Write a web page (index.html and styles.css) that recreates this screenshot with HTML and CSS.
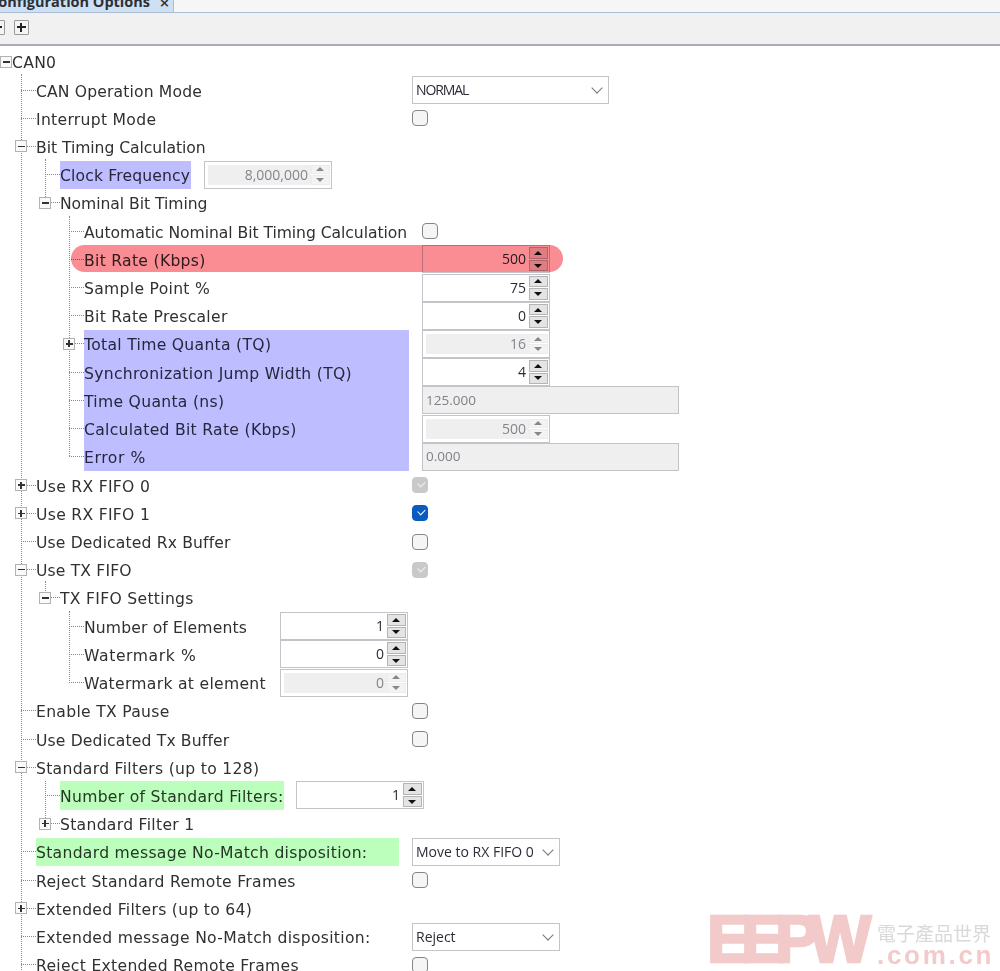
FILE: index.html
```html
<!DOCTYPE html>
<html lang="en">
<head>
<meta charset="utf-8">
<title>Configuration Options</title>
<link rel="stylesheet" href="styles.css">
</head>
<body>
<div class="page">
  <div class="tabbar">
    <div class="tab"><span class="tab-title">Configuration Options</span><span class="tab-close">×</span></div>
  </div>
  <div class="toolbar">
    <button class="tool tool-cut"><span class="minus"></span></button>
    <button class="tool"><span class="minus"></span><span class="plus"></span></button>
  </div>
  <div class="tree">
    <i class="guide g-main"></i>
    <i class="guide g-bit"></i>
    <i class="guide g-nominal"></i>
    <i class="guide g-tx"></i>
    <i class="guide g-txs"></i>
    <i class="guide g-std"></i>

    <div class="row"><span class="gut l0"><b class="box open"></b><i class="twig t-s"></i></span><span class="label">CAN0</span></div>
    <div class="row"><span class="gut l1"><i class="twig"></i></span><span class="label w376 snug">CAN Operation Mode</span><div class="select s196"><span class="squeeze">NORMAL</span><i class="chev"></i></div></div>
    <div class="row"><span class="gut l1"><i class="twig"></i></span><span class="label w376">Interrupt Mode</span><i class="check"></i></div>
    <div class="row"><span class="gut l1"><b class="box open"></b><i class="twig t-b"></i></span><span class="label w376 tight">Bit Timing Calculation</span></div>
    <div class="row"><span class="gut l2"><i class="twig"></i></span><span class="label hl-blue w131 snug">Clock Frequency</span><div class="spin off m13"><span class="val">8,000,000</span><span class="btns"><i class="up"></i><i class="down"></i></span></div></div>
    <div class="row"><span class="gut l2"><b class="box open"></b><i class="twig t-b"></i></span><span class="label tight">Nominal Bit Timing</span></div>
    <div class="row"><span class="gut l3"><i class="twig"></i></span><span class="label w338 tight">Automatic Nominal Bit Timing Calculation</span><i class="check"></i></div>
    <div class="row"><span class="gut l3"><i class="twig"></i></span><span class="label w338">Bit Rate (Kbps)</span><div class="spin"><span class="val">500</span><span class="btns"><i class="up"></i><i class="down"></i></span></div><i class="pill"></i></div>
    <div class="row"><span class="gut l3"><i class="twig"></i></span><span class="label w338">Sample Point %</span><div class="spin"><span class="val">75</span><span class="btns"><i class="up"></i><i class="down"></i></span></div></div>
    <div class="row"><span class="gut l3"><i class="twig"></i></span><span class="label w338">Bit Rate Prescaler</span><div class="spin"><span class="val">0</span><span class="btns"><i class="up"></i><i class="down"></i></span></div></div>
    <div class="row"><span class="gut l3"><b class="box"></b><i class="twig t-b"></i></span><span class="label hl-blue w325 mr13">Total Time Quanta (TQ)</span><div class="spin off"><span class="val">16</span><span class="btns"><i class="up"></i><i class="down"></i></span></div></div>
    <div class="row"><span class="gut l3"><i class="twig"></i></span><span class="label hl-blue w325 mr13">Synchronization Jump Width (TQ)</span><div class="spin"><span class="val">4</span><span class="btns"><i class="up"></i><i class="down"></i></span></div></div>
    <div class="row"><span class="gut l3"><i class="twig"></i></span><span class="label hl-blue w325 mr13">Time Quanta (ns)</span><div class="field">125.000</div></div>
    <div class="row"><span class="gut l3"><i class="twig"></i></span><span class="label hl-blue w325 mr13">Calculated Bit Rate (Kbps)</span><div class="spin off"><span class="val">500</span><span class="btns"><i class="up"></i><i class="down"></i></span></div></div>
    <div class="row"><span class="gut l3"><i class="twig"></i></span><span class="label hl-blue w325 mr13 wide">Error %</span><div class="field">0.000</div></div>
    <div class="row"><span class="gut l1"><b class="box"></b><i class="twig t-b"></i></span><span class="label w376">Use RX FIFO 0</span><i class="check gray"></i></div>
    <div class="row"><span class="gut l1"><b class="box"></b><i class="twig t-b"></i></span><span class="label w376">Use RX FIFO 1</span><i class="check blue"></i></div>
    <div class="row"><span class="gut l1"><i class="twig"></i></span><span class="label w376 snug">Use Dedicated Rx Buffer</span><i class="check"></i></div>
    <div class="row"><span class="gut l1"><b class="box open"></b><i class="twig t-b"></i></span><span class="label w376 snug">Use TX FIFO</span><i class="check gray"></i></div>
    <div class="row"><span class="gut l2"><b class="box open"></b><i class="twig t-b"></i></span><span class="label">TX FIFO Settings</span></div>
    <div class="row"><span class="gut l3"><i class="twig"></i></span><span class="label w196 snug">Number of Elements</span><div class="spin"><span class="val">1</span><span class="btns"><i class="up"></i><i class="down"></i></span></div></div>
    <div class="row"><span class="gut l3"><i class="twig"></i></span><span class="label w196 wide">Watermark %</span><div class="spin"><span class="val">0</span><span class="btns"><i class="up"></i><i class="down"></i></span></div></div>
    <div class="row"><span class="gut l3"><i class="twig"></i></span><span class="label w196">Watermark at element</span><div class="spin off"><span class="val">0</span><span class="btns"><i class="up"></i><i class="down"></i></span></div></div>
    <div class="row"><span class="gut l1"><i class="twig"></i></span><span class="label w376">Enable TX Pause</span><i class="check"></i></div>
    <div class="row"><span class="gut l1"><i class="twig"></i></span><span class="label w376 snug">Use Dedicated Tx Buffer</span><i class="check"></i></div>
    <div class="row"><span class="gut l1"><b class="box open"></b><i class="twig t-b"></i></span><span class="label w376">Standard Filters (up to 128)</span></div>
    <div class="row"><span class="gut l2"><i class="twig"></i></span><span class="label hl-green w224 m12">Number of Standard Filters:</span><div class="spin"><span class="val">1</span><span class="btns"><i class="up"></i><i class="down"></i></span></div></div>
    <div class="row"><span class="gut l2"><b class="box"></b><i class="twig t-b"></i></span><span class="label">Standard Filter 1</span></div>
    <div class="row"><span class="gut l1"><i class="twig"></i></span><span class="label hl-green w363 mr13">Standard message No-Match disposition:</span><div class="select s148"><span>Move to RX FIFO 0</span><i class="chev"></i></div></div>
    <div class="row"><span class="gut l1"><i class="twig"></i></span><span class="label w376">Reject Standard Remote Frames</span><i class="check"></i></div>
    <div class="row"><span class="gut l1"><b class="box"></b><i class="twig t-b"></i></span><span class="label w376">Extended Filters (up to 64)</span></div>
    <div class="row"><span class="gut l1"><i class="twig"></i></span><span class="label w376">Extended message No-Match disposition:</span><div class="select s148"><span>Reject</span><i class="chev"></i></div></div>
    <div class="row"><span class="gut l1"><i class="twig"></i></span><span class="label w376">Reject Extended Remote Frames</span><i class="check"></i></div>
  </div>
  <div class="mark">
    <span class="mark-logo">EEPW</span>
    <span class="mark-side"><span class="mark-cn">電子產品世界</span><span class="mark-url">.com.cn</span></span>
  </div>
</div>
</body>
</html>
```
FILE: styles.css
```css
html, body { margin: 0; padding: 0; background: #fff; }
.page {
  position: relative;
  width: 1000px;
  height: 971px;
  overflow: hidden;
  font-family: "DejaVu Sans", sans-serif;
  color: #303030;
  filter: blur(0.35px);
}
.tabbar {
  height: 12px;
  background: #f6f6f6;
  border-bottom: 1px solid #a9bdd4;
  display: flex;
  overflow: hidden;
}
.tab {
  width: 173px;
  height: 12px;
  background: #cfe0f3;
  border-right: 1px solid #a9bdd4;
  display: flex;
  position: relative;
  overflow: hidden;
}
.tab-title {
  font: 700 14.5px/14px "Open Sans", sans-serif;
  color: #2b3036;
  margin: -5px 0 0 -11px;
  white-space: nowrap;
}
.tab-close {
  font: 700 13px/13px "DejaVu Sans", sans-serif;
  color: #333;
  margin: -4px 0 0 9px;
}
.toolbar {
  background: #f1f1f1;
  border-bottom: 2px solid #a8adb3;
  display: flex;
  align-items: flex-start;
  padding-top: 7px;
  height: 24px;
}
.tool {
  position: relative;
  width: 15px;
  height: 15px;
  padding: 0;
  margin-left: 14px;
  background: #f4f4f4;
  border: 1.5px solid #9a9a9a;
  border-radius: 1px;
}
.tool-cut { margin-left: -10px; margin-right: -5px; }
.minus { position: absolute; left: 2px; right: 2px; top: 5px; height: 2px; background: #222; }
.plus { position: absolute; top: 2px; bottom: 2px; left: 5px; width: 2px; background: #222; }

.tree { position: relative; padding-top: 1.7px; }
.row {
  position: relative;
  display: flex;
  align-items: center;
  height: 28.22px;
  font-size: 15.6px;
  letter-spacing: 0.3px;
  white-space: nowrap;
}
.gut {
  flex: none;
  display: flex;
  align-items: center;
  justify-content: flex-end;
  align-self: stretch;
}
.l0 { width: 12px; }
.l1 { width: 36px; }
.l2 { width: 60px; }
.l3 { width: 84px; }
.twig { width: 15px; height: 0; border-top: 1px dotted #888; }
.t-b { width: 9px; }
.t-s { width: 5px; }
.box {
  position: relative;
  flex: none;
  width: 10px;
  height: 10px;
  border: 1px solid #b2b2b2;
  background: #fafafa;
}
.box::before { content: ""; position: absolute; left: 1.5px; right: 1.5px; top: 4.25px; height: 1.5px; background: #333; }
.box::after { content: ""; position: absolute; top: 1.5px; bottom: 1.5px; left: 4.25px; width: 1.5px; background: #333; }
.box.open::after { display: none; }
.label {
  flex: none;
  box-sizing: border-box;
  align-self: stretch;
  display: flex;
  align-items: center;
  padding-top: 3px;
}
.tight { letter-spacing: -0.05px; }
.snug { letter-spacing: 0.15px; }
.wide { letter-spacing: 0.6px; }
.w376 { width: 376px; }
.w338 { width: 338px; }
.w196 { width: 196px; }
.w131 { width: 131px; }
.w325 { width: 325px; }
.w224 { width: 224px; }
.w363 { width: 363px; }
.mr13 { margin-right: 13px; }
.m13 { margin-left: 13px; }
.m12 { margin-right: 12px; }
.hl-blue { background: #bdbdff; color: #26263c; }
.hl-green { background: #bcffbc; color: #263526; }

.select, .spin, .field {
  box-sizing: border-box;
  height: 28px;
  border: 1.5px solid #c3c3ca;
  display: flex;
  align-items: center;
  font: 400 14px/1 "Open Sans", sans-serif;
  letter-spacing: 0;
  color: #2c2c38;
  flex: none;
}
.select { background: #fff; padding: 0 5px 0 3px; justify-content: space-between; }
.squeeze { letter-spacing: -1.1px; }
.s196 { width: 197px; }
.s148 { width: 148px; }
.chev {
  width: 7px;
  height: 7px;
  border-right: 1.5px solid #777;
  border-bottom: 1.5px solid #777;
  transform: translateY(-2px) rotate(45deg);
  margin-right: 2px;
}
.spin { width: 128px; background: #fff; padding: 1px 1.5px; }
.val {
  flex: 1;
  padding-right: 2.5px;
  align-self: stretch;
  display: flex;
  align-items: center;
  justify-content: flex-end;
}
.btns { flex: none; width: 19px; height: 100%; display: flex; flex-direction: column; gap: 1px; }
.up, .down {
  flex: 1;
  position: relative;
  background: #e4e4e4;
  border: 1px solid #b4b4b4;
  box-sizing: border-box;
}
.up::after, .down::after {
  content: "";
  position: absolute;
  left: 50%;
  top: 50%;
  margin: -2px 0 0 -4px;
  border-left: 4px solid transparent;
  border-right: 4px solid transparent;
}
.up::after { border-bottom: 4px solid #111; }
.down::after { border-top: 4px solid #111; }
.spin.off { padding: 3px 1.5px 3px 3px; }
.spin.off .val { background: #efefef; color: #85858d; }
.spin.off .up, .spin.off .down { background: #f3f3f3; border-color: #ececec; }
.spin.off .up::after { border-bottom-color: #888; }
.spin.off .down::after { border-top-color: #888; }
.field { width: 257px; background: #efefef; color: #80808a; padding-left: 3px; font-size: 13.5px; }
.check {
  flex: none;
  box-sizing: border-box;
  position: relative;
  width: 16px;
  height: 16px;
  border: 1.5px solid #858585;
  border-radius: 4px;
  background: #f5f5f5;
}
.check.gray { background: #c9c9c9; border-color: #c9c9c9; }
.check.blue { background: #0a5cc0; border-color: #0a5cc0; }
.check.gray::after, .check.blue::after {
  content: "";
  position: absolute;
  left: 3.5px;
  top: 2px;
  width: 6px;
  height: 3.5px;
  border-left: 1.5px solid #fff;
  border-bottom: 1.5px solid #fff;
  transform: rotate(-45deg) translate(0, 1px);
}
.check.gray::after { border-color: #f2f2f2; }
.pill {
  position: absolute;
  left: 71px;
  top: 0;
  width: 492px;
  height: 27px;
  background: #f98d93;
  mix-blend-mode: multiply;
  border-radius: 14px;
}

.guide { position: absolute; width: 0; border-left: 1px dotted #888; }
.g-main { left: 21px; top: 28px; height: 900px; }
.g-bit { left: 45px; top: 113px; height: 42px; }
.g-nominal { left: 69px; top: 170px; height: 240px; }
.g-tx { left: 45px; top: 535px; height: 16px; }
.g-txs { left: 69px; top: 565px; height: 72px; }
.g-std { left: 45px; top: 735px; height: 43px; }

.mark {
  position: absolute;
  left: 707px;
  top: 916px;
  display: flex;
  align-items: flex-start;
  gap: 5px;
}
.mark-logo {
  font: 700 66px/46px "Liberation Sans", sans-serif;
  letter-spacing: -10px;
  color: #f3caca;
  -webkit-text-stroke: 2.5px #f3caca;
  width: 160px;
}
.mark-side { display: flex; flex-direction: column; margin: 6px 0 0 5px; }
.mark-cn { font: 400 19px/22px "Noto Sans CJK TC", sans-serif; color: #d9d9d9; }
.mark-url {
  font: 700 26px/22px "Liberation Sans", sans-serif;
  color: #f3caca;
  letter-spacing: 2.7px;
}
```
